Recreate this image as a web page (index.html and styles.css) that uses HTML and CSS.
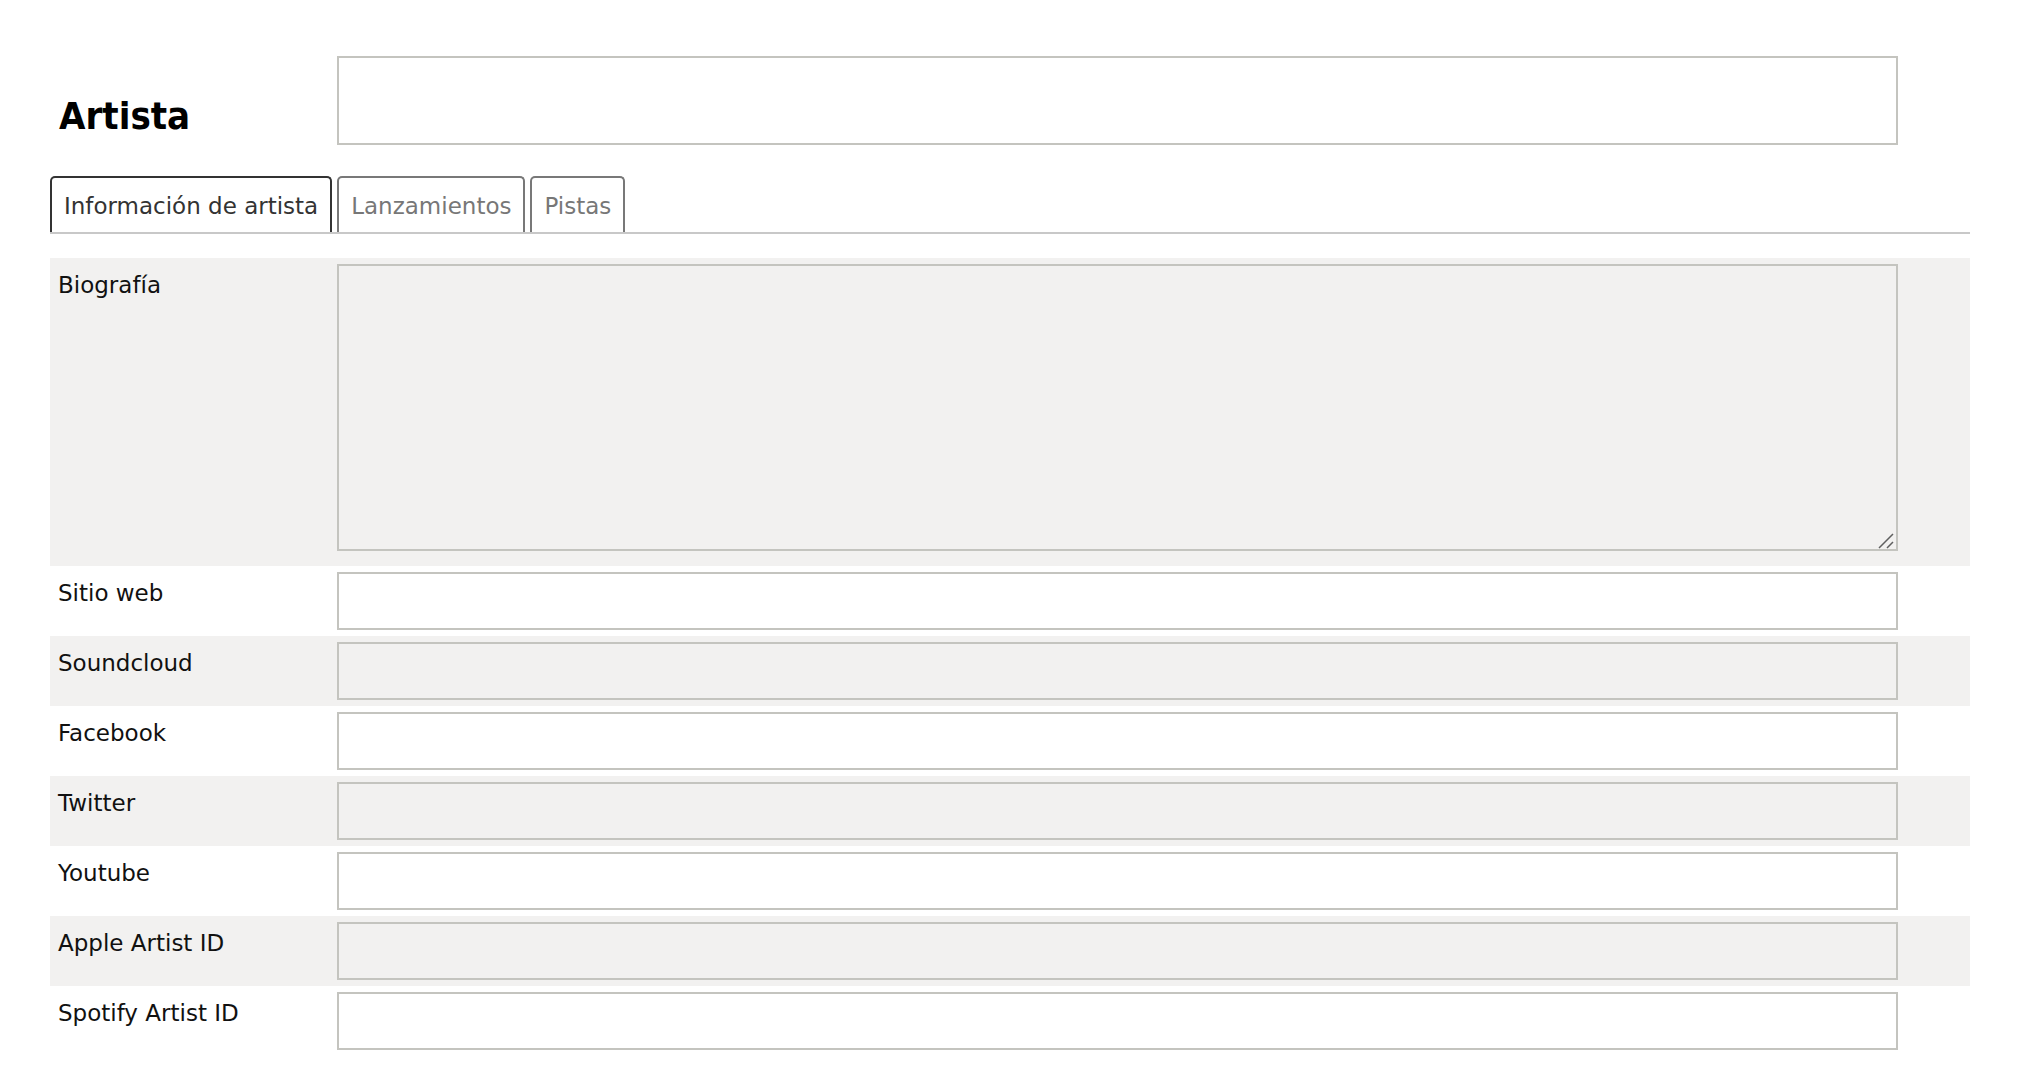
FILE: index.html
```html
<!DOCTYPE html>
<html lang="es">
<head>
    <meta charset="UTF-8">
    <meta name="viewport" content="width=device-width, initial-scale=1.0">
    <title>Artista</title>
    <link rel="stylesheet" href="styles.css">
</head>
<body>
    <div class="page">
        <div class="header">
            <h1 class="title">Artista</h1>
            <input type="text" class="field title-field">
        </div>

        <ul class="tabs">
            <li class="tab active">Información de artista</li>
            <li class="tab">Lanzamientos</li>
            <li class="tab">Pistas</li>
        </ul>

        <div class="rows">
            <div class="row shaded">
                <label for="bio">Biografía</label>
                <div class="bio-wrap">
                    <textarea id="bio" class="field bio-field"></textarea>
                    <!-- resize grip -->
                    <svg class="grip" width="20" height="20" viewBox="0 0 20 20">
                        <path d="M1 17 L15 3 M9 17 L15 11" stroke="#5f5f5f" stroke-width="1.5" fill="none"/>
                    </svg>
                </div>
            </div>
            <div class="row">
                <label for="web">Sitio web</label>
                <input type="text" id="web" class="field">
            </div>
            <div class="row shaded">
                <label for="soundcloud">Soundcloud</label>
                <input type="text" id="soundcloud" class="field">
            </div>
            <div class="row">
                <label for="facebook">Facebook</label>
                <input type="text" id="facebook" class="field">
            </div>
            <div class="row shaded">
                <label for="twitter">Twitter</label>
                <input type="text" id="twitter" class="field">
            </div>
            <div class="row">
                <label for="youtube">Youtube</label>
                <input type="text" id="youtube" class="field">
            </div>
            <div class="row shaded">
                <label for="apple">Apple Artist ID</label>
                <input type="text" id="apple" class="field">
            </div>
            <div class="row">
                <label for="spotify">Spotify Artist ID</label>
                <input type="text" id="spotify" class="field">
            </div>
        </div>
    </div>
</body>
</html>
```

FILE: styles.css
```css
body {
    margin: 0;
    font-family: "DejaVu Sans", sans-serif;
    font-size: 23px;
    color: #111;
    background: #fff;
}
.page {
    margin: 0 48px 0 50px;
    padding-top: 56px;
}
.header {
    display: flex;
    align-items: flex-end;
    padding-right: 72px;
}
.title {
    box-sizing: border-box;
    width: 287px;
    margin: 0 0 7px;
    padding-left: 9px;
    font-family: "DejaVu Sans Condensed", "DejaVu Sans", sans-serif;
    font-stretch: condensed;
    font-size: 38px;
    font-weight: bold;
    line-height: normal;
    color: #000;
}
.field {
    display: block;
    box-sizing: border-box;
    width: 100%;
    height: 58px;
    margin: 0;
    border: 2px solid #c4c4bf;
    border-radius: 0;
    background: transparent;
    font: inherit;
}
.title-field {
    flex: 1;
    height: 89px;
    background: #fff;
}
.tabs {
    display: flex;
    gap: 5px;
    margin: 31px 0 24px;
    padding: 0;
    list-style: none;
    border-bottom: 2px solid #c8c8c8;
}
.tab {
    padding: 15px 12px 13px;
    border: 2px solid #787878;
    border-bottom: none;
    border-radius: 5px 5px 0 0;
    color: #777;
    line-height: normal;
}
.tab.active {
    border-color: #333;
    color: #333;
}
.row {
    display: grid;
    grid-template-columns: 287px 1fr;
    padding: 6px 72px 6px 0;
}
.row.shaded {
    background: #f2f1f0;
}
.row label {
    padding: 8px 8px 0;
    line-height: normal;
}
.bio-wrap {
    position: relative;
    margin-bottom: 9px;
}
.bio-field {
    height: 287px;
    resize: none;
}
.grip {
    position: absolute;
    right: 0;
    bottom: 0;
}
```
